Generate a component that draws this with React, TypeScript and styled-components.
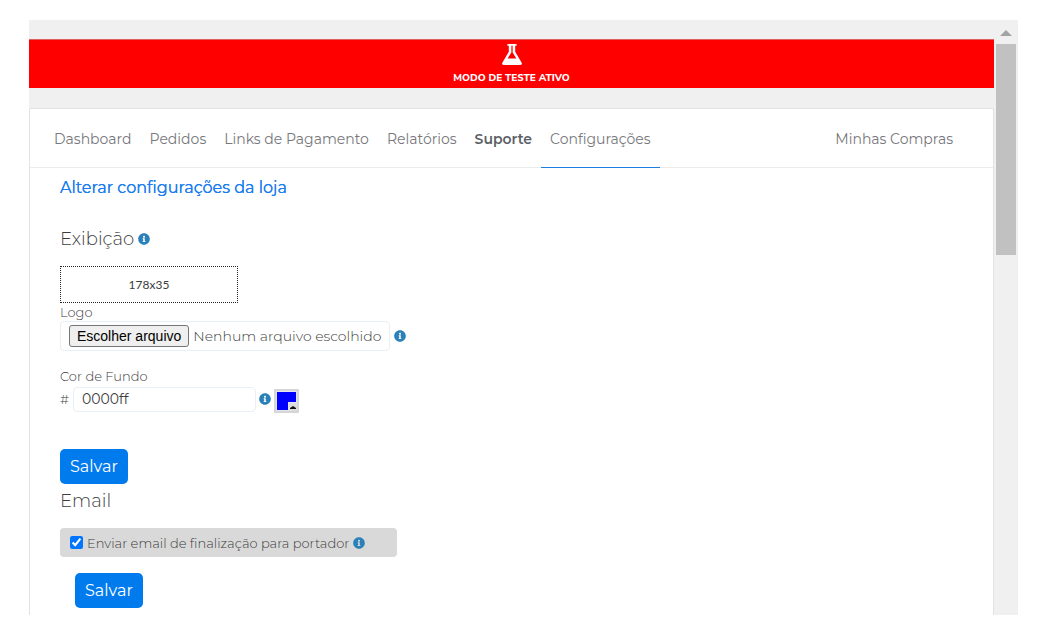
import React, { useRef, useState } from "react";
import styled, { createGlobalStyle } from "styled-components";
import { FaInfoCircle } from "react-icons/fa";

const GlobalStyle = createGlobalStyle`
  *, *::before, *::after { box-sizing: border-box; }
  body {
    margin: 0;
    background: #ffffff;
    color: #3c3c3c;
    font-family: Montserrat, Inter, "Liberation Sans", sans-serif;
    font-size: 13px;
    font-weight: 300;
    line-height: 18px;
  }
  button, input { font: inherit; color: inherit; }
`;

const Page = styled.div`
  padding: 20px 21px 24px 29px;
`;

const Viewport = styled.div`
  display: flex;
  background: #f0f0f0;
`;

const Content = styled.div`
  flex: 1;
  min-width: 0;
  padding-top: 19px;
`;

const Rail = styled.div`
  display: flex;
  flex-direction: column;
  align-items: center;
  gap: 8px;
  width: 24px;
  padding-top: 10px;
`;

const RailArrow = styled.div`
  border: 6px solid transparent;
  border-top: 0;
  border-bottom-color: #a3a3a3;
`;

const RailThumb = styled.div`
  width: 20px;
  height: 211px;
  background: #c1c1c1;
`;

const Banner = styled.div`
  display: flex;
  flex-direction: column;
  align-items: center;
  gap: 3px;
  height: 49px;
  padding-top: 4px;
  background: #ff0000;
  border-top: 1px solid #e06060;
  color: #ffffff;
  font-family: "Nunito Sans", Lato, "Liberation Sans", sans-serif;
  font-size: 10px;
  font-weight: 800;
  line-height: 20px;
`;

const Card = styled.main`
  margin-top: 20px;
  background: #ffffff;
  border: 1px solid #e2e2e2;
  border-bottom: 0;
  border-radius: 2px 2px 0 0;
`;

const Nav = styled.nav`
  display: flex;
  align-items: stretch;
  height: 59px;
  padding: 0 31px 0 15px;
  border-bottom: 1px solid #ebebeb;
`;

const NavLink = styled.a<{ $strong?: boolean; $active?: boolean; $end?: boolean }>`
  display: flex;
  align-items: center;
  height: 59px;
  padding: 2px 9px 0;
  border-bottom: 1px solid ${(p) => (p.$active ? "#1a7fe0" : "transparent")};
  margin-left: ${(p) => (p.$end ? "auto" : "0")};
  color: ${(p) => (p.$strong ? "#5c5f66" : "#77777c")};
  font-size: 14px;
  font-weight: ${(p) => (p.$strong ? 600 : 400)};
  text-decoration: none;
  white-space: nowrap;
`;

const Body = styled.div`
  padding: 8px 30px 7px;
`;

const Title = styled.h1`
  margin: 0;
  color: #1a7df0;
  font-size: 16px;
  font-weight: 400;
  line-height: 24px;
  text-shadow: 0 0 0 #1a7df0;
`;

const SectionTitle = styled.h2<{ $top: number }>`
  display: flex;
  align-items: center;
  gap: 4px;
  margin: ${(p) => p.$top}px 0 15px;
  font-size: 18px;
  font-weight: 300;
  line-height: 24px;
`;

const InfoButton = styled.button`
  display: flex;
  padding: 0;
  border: 0;
  background: none;
  color: #2a80b9;
  font-size: 12px;
  cursor: pointer;
`;

const LogoPreview = styled.div`
  display: flex;
  align-items: center;
  justify-content: center;
  width: 178px;
  height: 37px;
  border: 1px dotted #222222;
  font-family: Lato, "Liberation Sans", sans-serif;
  font-size: 12px;
  font-weight: 400;
`;

const FieldLabel = styled.label`
  display: block;
`;

const FieldRow = styled.div`
  display: flex;
  align-items: center;
`;

const FileBox = styled.div`
  display: flex;
  align-items: center;
  gap: 4px;
  width: 330px;
  height: 30px;
  margin-right: 4px;
  padding: 0 8px;
  border: 1px solid #e9eff6;
  border-radius: 4px;
  font-size: 14px;
  white-space: nowrap;
`;

const HiddenFile = styled.input`
  display: none;
`;

const FileButton = styled.button`
  height: 22px;
  padding: 0 7px;
  border: 1px solid #767676;
  border-radius: 3px;
  background: #efefef;
  color: #000000;
  font-family: "Liberation Sans", Arial, sans-serif;
  font-size: 14px;
  font-weight: 400;
  line-height: 18px;
`;

const ColorInput = styled.input`
  width: 183px;
  height: 25px;
  margin: 0 3px 0 4px;
  padding: 0 8px;
  border: 1px solid #e9eff6;
  border-radius: 4px;
  background: #ffffff;
  font-size: 14px;
  font-weight: 400;
`;

const Swatch = styled.button`
  display: flex;
  margin: 4px 0 0 3px;
  padding: 0;
  border: 0;
  background: none;
`;

const SaveButton = styled.button`
  height: 35px;
  padding: 0 10px;
  border: 0;
  border-radius: 5px;
  background: #007bee;
  color: #ffffff;
  font-size: 16px;
  font-weight: 400;
  line-height: 24px;
`;

const ColorField = styled.div`
  margin: 16px 0 36px;
`;

const CheckRow = styled.div`
  display: flex;
  align-items: center;
  gap: 4px;
  width: 337px;
  height: 29px;
  margin-bottom: 16px;
  padding: 0 10px;
  border-radius: 4px;
  background: #d9d9d9;
`;

const Checkbox = styled.input`
  width: 13px;
  height: 13px;
  margin: 0;
  accent-color: #0075ff;
`;

const Indent = styled.div`
  padding-left: 15px;
`;

const links = [
  { text: "Dashboard" },
  { text: "Pedidos" },
  { text: "Links de Pagamento" },
  { text: "Relatórios" },
  { text: "Suporte", strong: true },
  { text: "Configurações", active: true },
  { text: "Minhas Compras", end: true },
];

function FlaskIcon() {
  return (
    <svg width="22" height="23" viewBox="0 0 22 23" fill="#ffffff" aria-hidden="true">
      <path
        fillRule="evenodd"
        d="M6 0H16V2H14.5V8.5L21.6 20.6Q22.3 23 20 23H2Q-.3 23 .4 20.6L7.5 8.5V2H6ZM10.3 2V9.2L6.2 15.8H15.8L11.7 9.2V2Z"
      />
    </svg>
  );
}

function Info() {
  return (
    <InfoButton type="button" aria-label="Ajuda">
      <FaInfoCircle />
    </InfoButton>
  );
}

export default function App() {
  const fileRef = useRef<HTMLInputElement>(null);
  const [color, setColor] = useState("0000ff");
  const [fileName, setFileName] = useState("Nenhum arquivo escolhido");

  return (
    <Page>
      <GlobalStyle />
      <Viewport>
        <Content>
          <Banner>
            <FlaskIcon />
            MODO DE TESTE ATIVO
          </Banner>
          <Card>
            <Nav>
              {links.map((l) => (
                <NavLink key={l.text} href="#" $strong={l.strong} $active={l.active} $end={l.end}>
                  {l.text}
                </NavLink>
              ))}
            </Nav>
            <Body>
              <Title>Alterar configurações da loja</Title>
              <SectionTitle $top={27}>
                Exibição <Info />
              </SectionTitle>
              <LogoPreview>178x35</LogoPreview>
              <FieldLabel htmlFor="logo">Logo</FieldLabel>
              <FieldRow>
                <FileBox>
                  <HiddenFile
                    id="logo"
                    type="file"
                    ref={fileRef}
                    onChange={(e) =>
                      setFileName(e.target.files?.[0]?.name ?? "Nenhum arquivo escolhido")
                    }
                  />
                  <FileButton type="button" onClick={() => fileRef.current?.click()}>
                    Escolher arquivo
                  </FileButton>
                  {fileName}
                </FileBox>
                <Info />
              </FieldRow>
              <ColorField>
                <FieldLabel htmlFor="fundo">Cor de Fundo</FieldLabel>
                <FieldRow>
                  #
                  <ColorInput id="fundo" value={color} onChange={(e) => setColor(e.target.value)} />
                  <Info />
                  <Swatch type="button" aria-label="Escolher cor">
                    <svg width="25" height="24" viewBox="0 0 25 24">
                      <rect width="25" height="24" rx="1" fill="#d6d6d6" />
                      <rect x="2" y="2" width="21" height="20" fill="#e4e4f4" />
                      <path d="M3 3H22V13H14V21H3Z" fill={`#${color}`} />
                      <rect x="15" y="14" width="8" height="8" fill="#dddddd" />
                      <path d="M16 20V19L19 17L22 19V20Z" fill="#111111" />
                    </svg>
                  </Swatch>
                </FieldRow>
              </ColorField>
              <SaveButton type="button">Salvar</SaveButton>
              <SectionTitle $top={5}>Email</SectionTitle>
              <CheckRow>
                <Checkbox id="finalizacao" type="checkbox" defaultChecked />
                <label htmlFor="finalizacao">Enviar email de finalização para portador</label>
                <Info />
              </CheckRow>
              <Indent>
                <SaveButton type="button">Salvar</SaveButton>
              </Indent>
            </Body>
          </Card>
        </Content>
        <Rail aria-hidden="true">
          <RailArrow />
          <RailThumb />
        </Rail>
      </Viewport>
    </Page>
  );
}
